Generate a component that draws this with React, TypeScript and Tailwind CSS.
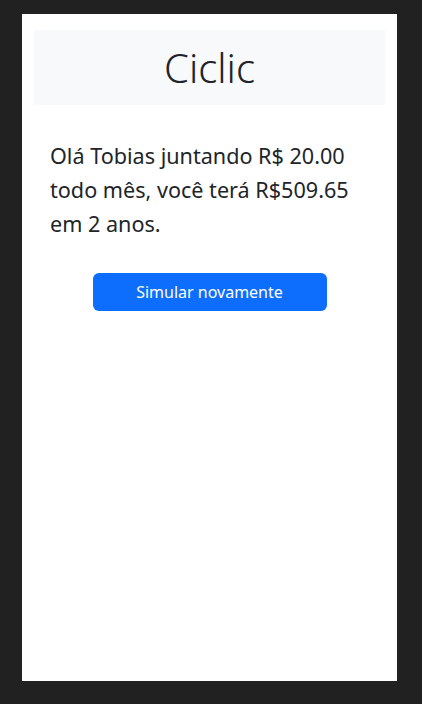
import React from "react";

export default function App() {
  return (
    <div
      className="min-h-[704px] w-full bg-[#212122] pl-[22px] pt-[14px]"
      style={{ fontFamily: '"Noto Sans", "Open Sans", sans-serif' }}
    >
      <div className="flex h-[667px] w-[375px] flex-col bg-white px-3 pt-4 text-[#212529]">
        <div className="flex h-[75px] items-center justify-center bg-[#f8f9fa]">
          <h1 className="text-[40px] font-light leading-none">Ciclic</h1>
        </div>
        <p className="mt-[34px] px-4 text-[21.6px] leading-[34px]">
          Olá Tobias juntando R$ 20.00 todo mês, você terá R$509.65 em 2 anos.
        </p>
        <div className="mt-[32px] flex justify-center">
          <button className="h-[38px] w-[234px] rounded-md bg-[#0d6efd] text-[16px] text-white">
            Simular novamente
          </button>
        </div>
      </div>
    </div>
  );
}
